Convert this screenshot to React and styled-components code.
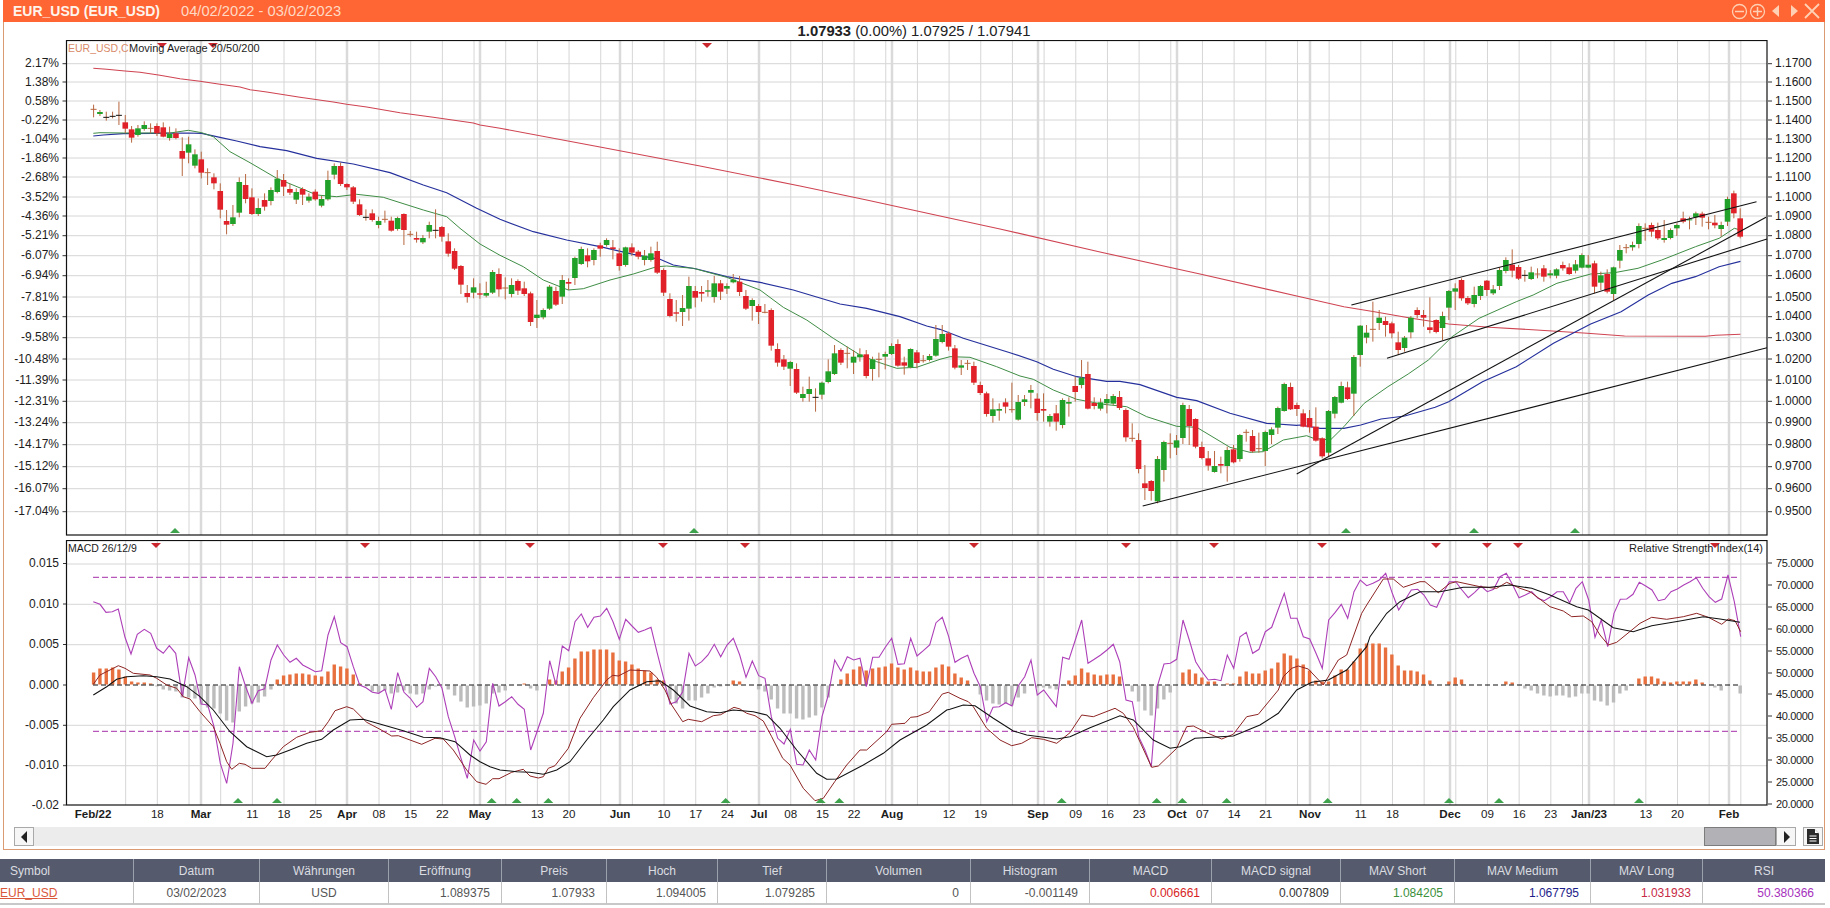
import React from 'react';
import styled, { createGlobalStyle } from 'styled-components';

const Global = createGlobalStyle`
  html, body { margin: 0; padding: 0; background: #fff; overflow: hidden; }
  body { font-family: "Liberation Sans", Arial, sans-serif; }
`;

const barX = (i) => 93.6 + 6.333 * i;
const seg = (pts, ox, oy, sx = 3, sy = 3) => pts.map(([x, y]) => [ox + x / sx, oy + y / sy]);
const join = (...segs) => {
  const out = [];
  segs.forEach((s) => s.forEach((p) => { if (!out.length || p[0] > out[out.length - 1][0] + 0.5) out.push(p); }));
  return out;
};
const toPts = (a) => a.map(([x, y]) => `${x.toFixed(1)},${y.toFixed(1)}`).join(' ');
const SX6 = 1568 / 530;

/* candles: type, wick top, body top, body bottom, wick bottom (zoom units) */
const C7 = [['t',14,28,28,52],['g',30,36,42,48],['d',35,52,52,62],['d',35,49,49,55],['d',5,46,46,75],['r',45,67,86,100],['r',78,88,113,128],['g',75,85,105,110],['g',64,75,87,92],['t',70,85,85,100],
['r',70,78,100,108],['r',67,82,110,112],['g',80,102,114,122],['r',85,100,114,118],['r',112,153,176,228],['g',110,133,158,190],['g',148,163,197,205],['r',155,178,218,235],['t',205,218,218,255],['r',220,232,250,268],
['r',250,273,329,355],['r',330,363,374,403],['g',315,352,372,378],['g',232,246,338,352],['r',222,255,297,310],['r',265,292,342,345],['g',295,324,342,348],['r',280,300,320,332],['g',262,270,303,316],['g',210,236,276,280],
['r',222,240,260,288],['r',252,267,278,285],['g',265,276,299,312],['r',262,267,284,315],['g',280,290,302,308],['r',268,275,298,302],['g',288,297,317,322],['g',212,240,298,302],['g',190,198,224,238],['r',188,198,252,258],
['r',250,252,262,270],['r',258,262,305,312],['r',298,313,345,348],['d',328,352,352,362],['r',328,340,360,365],['g',350,363,375,385],['t',332,358,358,368],['r',350,362,392,395],['g',350,354,387,392],['r',340,342,390,435],
['t',393,403,403,410],['r',395,414,419,428],['g',405,414,427,432],['g',365,375,395,415],['d',328,391,391,415],['r',378,381,410,425],['r',400,424,461,470],['r',445,453,506,510],['r',495,498,554,582],['r',555,579,591,608],
['g',535,562,578,595],['r',550,580,584,596],['g',545,579,587,592],['g',510,516,578,582]];
const C8 = [['r',205,222,268,290],['t',232,264,264,298],['g',235,255,282,292],['r',238,243,272,285],['r',245,265,282,288],['r',275,280,366,378],['g',300,344,354,384],['g',325,330,352,358],['g',255,260,326,330],['r',260,273,314,318],
['g',225,240,290,312],['r',235,246,251,270],['g',170,174,234,255],['g',140,147,192,195],['r',145,166,184,202],['g',145,150,180,196],['r',128,136,146,170],['g',115,120,135,140],['r',120,142,147,178],['r',145,160,198,212],
['g',140,142,195,200],['r',130,142,158,168],['r',150,155,170,178],['g',150,167,180,196],['g',140,160,180,185],['r',125,153,218,222],['r',205,210,278,288],['r',280,297,348,352],['r',300,337,341,365],['g',285,324,336,378],
['g',230,258,326,362],['r',258,273,293,322],['r',258,276,281,305],['g',240,271,275,290],['g',228,250,291,308],['r',240,250,275,300],['g',250,258,266,282],['g',222,239,247,250],['r',228,245,276,288],['r',270,288,326,330],
['g',295,300,318,362],['r',312,318,336,372],['t',312,337,337,340],['r',325,330,437,452],['r',430,447,488,500],['r',465,478,500,510],['g',483,486,506,558],['r',490,507,578,582],['g',560,582,594,605],['g',530,567,582,605],
['d',565,592,592,635],['g',545,548,584,598],['g',478,514,546,550],['g',435,460,522,525],['r',445,450,488,495],['t',440,460,460,505],['g',450,470,488,522],['g',445,463,472,485],['r',450,463,528,535],['g',470,478,507,542],
['t',458,478,478,532],['g',455,462,470,508],['g',430,438,462,465],['r',418,432,497,500],['r',470,487,497,524],['g',445,447,502,505],['r',450,457,489,505],['t',465,482,482,488],['g',462,468,480,484]];
const C9 = [['g',45,87,137,140],['g',45,72,96,100],['r',65,70,110,122],['r',105,115,173,178],['g',150,166,173,195],['t',150,160,160,180],['r',155,168,218,225],['r',215,225,249,255],['r',245,250,312,320],['g',265,298,318,338],
['g',280,297,302,332],['r',265,277,290,310],['t',218,299,299,308],['g',255,276,329,332],['g',255,268,276,288],['g',225,240,248,295],['r',250,266,309,332],['r',250,297,302,335],['g',312,318,335,350],['r',285,310,335,362],
['g',265,270,345,355],['g',262,276,281,320],['r',200,228,246,275],['g',150,203,225,235],['r',155,192,296,298],['r',262,279,288,298],['g',265,277,296,302],['g',252,267,280,310],['g',252,258,281,285],['r',243,261,294,300],
['r',295,300,382,395],['t',340,385,385,395],['r',370,390,477,490],['r',465,520,534,570],['r',510,513,543,572],['g',438,447,574,580],['g',392,396,480,515],['t',370,400,400,445],['g',375,391,413,435],['g',278,285,384,402],
['r',285,297,348,405],['r',325,327,410,415],['r',395,411,444,448],['r',423,445,467,482],['g',423,468,486,488],['r',440,462,467,490],['g',410,420,468,515],['r',405,418,457,460],['g',372,375,447,455],['t',358,367,367,395],
['r',360,378,424,428],['t',368,416,416,428],['g',362,366,423,468],['g',352,358,375,402],['g',290,294,353,372],['g',218,222,303,305],['r',218,231,298,300],['r',278,285,297,318],['r',298,310,350,352],['r',300,324,352,368],
['r',292,350,392,395],['r',382,385,439,445],['g',300,303,428,440],['g',258,261,311,325],['g',215,228,278,280],['r',215,232,267,270],['g',135,141,251,318],['g',45,47,135,170],['g',45,68,83,100]];
const C6 = [['t',395,478,478,515],['g',420,443,459,480],['r',440,453,465,500],['r',455,460,490,505],['r',485,517,540,555],['g',498,503,534,545],['g',438,443,487,505],['r',412,420,435,445],['r',420,435,443,470],['r',382,472,480,490],
['r',448,450,486,490],['g',425,438,474,510],['g',360,363,413,450],['g',340,355,365,420],['r',325,330,385,392],['r',378,384,400,405],['g',350,375,402,412],['g',345,348,378,390],['r',330,332,360,378],['g',345,358,370,375],
['g',292,300,348,360],['g',262,270,303,310],['r',238,284,302,322],['r',285,291,326,330],['d',300,316,316,335],['g',290,307,327,330],['t',295,312,312,325],['r',285,295,320,335],['g',300,310,316,325],['g',295,298,317,325],
['r',275,285,295,302],['r',280,292,312,315],['g',270,283,302,310],['g',250,255,293,295],['g',255,284,293,295],['r',272,280,350,370],['g',305,316,338,360],['r',298,312,365,370],['g',290,292,372,390],['g',225,240,272,295],
['t',222,233,233,250],['g',215,225,232,242],['g',160,168,222,235],['t',160,175,175,212],['r',158,165,185,200],['r',158,180,205,210],['g',150,204,210,218],['g',175,180,204,208],['g',160,165,175,198],['r',125,145,155,160],
['g',140,148,151,178],['g',125,130,142,165],['r',125,131,143,170],['t',140,157,157,178],['r',135,158,166,175],['g',155,165,177,200],['g',80,87,155,168],['r',62,70,130,145],['r',115,145,200,205]];

const toCandles = (list, start, oy) => list.map((c, k) => ({ t: c[0], i: start + k, wt: oy + c[1] / 3, bt: oy + c[2] / 3, bb: oy + c[3] / 3, wb: oy + c[4] / 3 }));
const candles = [...toCandles(C7, 0, 100), ...toCandles(C8, 64, 200), ...toCandles(C9, 133, 310), ...toCandles(C6, 202, 170)];

const hist = [
12,16,16,17,15,8,3,2,2,1,
-1,-4,-5,-6,-12,-12,-13,-19,-22,-23,
-28,-35,-37,-26,-21,-18,-17,-11,-4,5,
9,10,11,11,10,9,8,13,20,18,
16,10,1,-1,-6,-7,-5,-8,-7,-5,
-8,-9,-8,-4,-1,0,-4,-10,-16,-22,
-21,-20,-18,-8,-7,-5,0,0,1,-3,
-5,0,5,4,13,17,26,33,33,35,
35,35,32,24,23,20,16,14,12,5,
4,-14,-18,-23,-15,-15,-12,-8,-2,-1,
0,4,3,0,0,-4,-6,-14,-23,-28,
-28,-33,-34,-32,-30,-22,-12,0,5,11,
15,18,14,16,17,18,21,17,15,17,
14,13,13,17,20,18,11,7,4,0,
-9,-15,-18,-19,-18,-20,-12,-8,0,-2,
-2,-3,-4,0,4,9,16,12,10,9,
10,10,8,0,-6,-16,-25,-30,-23,-14,
-7,0,12,15,11,7,3,3,0,1,
1,8,13,11,11,14,16,22,31,29,
26,20,14,4,3,3,9,15,15,23,
36,41,41,41,37,30,19,14,14,13,
10,4,0,0,3,7,5,0,0,0,
0,0,0,3,2,0,-3,-5,-8,-10,
-11,-10,-10,-12,-11,-8,-8,-15,-16,-20,
-17,-8,-5,0,6,8,8,6,3,2,
3,3,3,5,2,0,-2,-5,0,0,
-8];

const ma200 = join(
  seg([[280,205],[320,208],[375,213],[420,217],[480,226],[540,236],[600,244],[660,253],[720,261],[750,269],[800,276],[900,292],[1000,306],[1040,313],[1100,321],[1200,338],[1300,352],[1420,369],[1440,375],[1500,385]],0,0),
  [[600,147],[700,166],[800,186],[866.7,200],[940,216],[1000,229],[1100,252],[1200,274]],
  seg([[0,380],[130,410],[220,425],[330,445],[440,462],[560,472],[700,480],[850,490],[960,498],[1200,499],[1230,496],[1303,493]],1300,170,SX6)
);
const ma50 = join(
  seg([[70,108],[100,105],[160,101],[250,100],[350,99],[395,100],[450,112],[500,123],[570,140],[650,152],[740,175],[850,192],[960,218],[1060,255],[1130,278],[1220,325],[1290,358]],70,100),
  seg([[0,52],[100,95],[200,120],[300,140],[400,163],[480,178],[520,195],[590,207],[680,230],[780,247],[880,270],[1020,312],[1100,325],[1200,350],[1280,378],[1320,388]],500,200),
  seg([[0,50],[100,85],[240,128],[320,155],[370,178],[440,200],[530,214],[570,214],[630,224],[740,262],[800,272],[900,310],[1010,340],[1100,346]],930,310),
  seg([[0,765],[60,775],[130,775],[180,765],[240,747],[310,738],[400,712],[440,695],[540,635],[640,590],[750,520],[860,462],[950,425],[1030,375],[1100,340],[1170,320],[1240,290],[1303,274]],1300,170,SX6)
);
const ma20 = join(
  seg([[70,100],[90,98],[160,99],[300,99],[355,91],[395,98],[430,110],[480,155],[540,188],[620,235],[700,268],[740,285],[800,290],[860,283],[940,292],[1060,330],[1130,350],[1170,385],[1230,432],[1290,466]],70,100),
  seg([[0,163],[70,200],[130,240],[205,270],[250,266],[330,240],[400,222],[470,200],[500,198],[580,205],[680,232],[780,270],[850,322],[920,360],[1000,415],[1080,465],[1130,485],[1190,505],[1250,502],[1320,478]],500,200),
  seg([[0,163],[60,140],[120,142],[200,170],[270,198],[310,208],[370,240],[440,268],[520,283],[590,290],[650,320],[740,349],[800,352],[900,412],[960,427],[1000,425],[1060,390],[1130,377]],930,310),
  seg([[40,805],[90,810],[130,770],[190,700],[260,650],[320,612],[380,570],[450,500],[530,445],[640,395],[690,375],[760,340],[860,312],[930,308],[1000,295],[1070,270],[1170,230],[1240,205],[1285,175],[1303,180]],1300,170,SX6)
);
const trends = [[1351.4,305,1756.5,201.7],[1387,358.3,1767,239],[1296.7,474,1766,217.3],[1142.7,506,1767,347.7]];

const rsi = join(
  seg([[280,305],[300,313],[318,337],[337,335],[355,327],[375,412],[393,462],[412,403],[433,388],[452,400],[470,445],[490,460],[508,437],[527,460],[547,590],[566,473],[585,525],[604,612],[623,615],[642,680],[661,790],[680,850],[699,730],[718,500],[737,560],[756,610],[775,572],[794,566],[813,480],[832,435],[851,465],[870,487],[889,475],[908,495],[927,505],[946,515],[965,512],[984,405],[1003,350],[1022,428],[1041,440],[1060,500],[1079,555],[1098,563],[1117,577],[1136,580],[1155,568],[1174,628],[1193,518],[1212,577],[1231,595],[1250,622],[1269,605],[1288,505],[1307,530],[1326,565],[1345,650],[1364,710],[1383,775],[1402,835],[1421,720],[1440,753]],0,500),
  seg([[0,630],[19,605],[38,430],[57,498],[76,485],[95,470],[114,493],[133,508],[152,630],[171,575],[190,520],[209,362],[228,435],[247,318],[266,332],[285,245],[304,222],[323,262],[342,232],[361,228],[380,205],[399,245],[418,298],[437,238],[456,258],[475,277],[494,270],[513,262],[532,340],[551,415],[570,492],[589,485],[608,455],[627,340],[646,378],[665,365],[684,345],[703,313],[722,350],[741,315],[760,295],[779,345],[798,412],[817,363],[836,407],[855,415],[874,530],[893,595],[912,612],[931,568],[950,673],[969,675],[988,630],[1007,660],[1026,530],[1045,465],[1064,360],[1083,393],[1102,350],[1121,360],[1140,355],[1159,440],[1178,352],[1197,352],[1216,322],[1235,295],[1254,373],[1273,371],[1292,295],[1311,348],[1330,332],[1349,315],[1368,248],[1387,232],[1406,290],[1425,367]],480,540),
  seg([[15,367],[34,355],[53,346],[72,400],[91,440],[110,545],[129,502],[148,500],[167,488],[186,498],[205,437],[224,410],[243,360],[262,465],[281,450],[300,475],[319,500],[338,352],[357,358],[376,300],[395,240],[414,370],[433,358],[452,345],[471,330],[490,313],[509,365],[528,480],[547,485],[566,590],[585,630],[604,680],[623,435],[642,372],[661,370],[680,358],[699,240],[718,300],[737,365],[756,395],[775,420],[794,418],[813,422],[832,345],[851,385],[870,290],[889,277],[908,340],[927,328],[946,275],[965,262],[984,210],[1003,160],[1022,235],[1041,235],[1060,290],[1079,297],[1098,340],[1117,385],[1136,240],[1155,218],[1174,193],[1193,235],[1212,155],[1231,120],[1250,137],[1269,130],[1288,120]],950,540),
  seg([[107,130],[127,190],[146,240],[165,210],[184,180],[203,178],[222,195],[241,225],[260,232],[279,190],[298,155],[317,155],[336,180],[355,203],[374,187],[393,168],[412,185],[431,178],[450,140],[469,130],[488,165],[507,203],[526,195],[545,185],[564,205],[583,212],[602,200],[621,185],[640,185],[659,218],[678,175],[697,155],[716,210],[735,322],[754,270],[773,350],[792,250],[811,208],[830,207],[849,193],[868,157],[887,168],[906,180],[925,212],[944,208],[963,185],[982,177],[1001,165],[1020,155],[1039,143],[1058,175],[1077,200],[1096,217],[1115,207],[1134,135],[1153,215],[1172,320]],1350,530)
);
const macd = join(
  seg([[280,553],[300,525],[340,505],[355,497],[375,505],[400,520],[450,525],[470,535],[500,555],[530,565],[550,590],[570,597],[600,635],[640,680],[660,730],[680,785],[695,808],[718,790],[735,793],[755,805],[795,805],[815,780],[850,740],[890,712],[930,697],[965,692],[985,665],[1005,632],[1040,620],[1060,627],[1100,667],[1140,688],[1175,708],[1195,707],[1265,733],[1305,715],[1330,717],[1360,750],[1400,810],[1430,845]],0,500),
  seg([[0,728],[18,733],[38,716],[57,716],[95,697],[130,688],[150,708],[175,714],[190,710],[205,685],[225,677],[265,625],[300,535],[340,473],[380,420],[398,406],[415,408],[450,390],[510,393],[530,412],[555,450],[575,495],[608,545],[625,538],[665,545],[700,527],[722,524],[762,502],[780,507],[800,520],[825,527],[850,543],[875,590],[908,655],[930,675],[970,745],[1005,782],[1030,775],[1064,725],[1100,675],[1140,630],[1160,630],[1220,575],[1235,553],[1275,550],[1292,532],[1311,530],[1348,515],[1387,462],[1405,457]],480,540),
  seg([[0,460],[30,475],[55,485],[70,500],[110,565],[150,600],[185,617],[215,610],[245,593],[280,598],[320,610],[360,578],[395,525],[430,530],[495,505],[520,520],[550,562],[605,682],[625,678],[680,625],[710,560],[730,558],[770,578],[815,597],[850,583],[890,530],[925,523],[985,450],[1000,410],[1025,385],[1045,378],[1075,387],[1120,435],[1165,360],[1190,345],[1235,220]],950,540),
  seg([[30,270],[50,225],[100,147],[130,147],[160,172],[210,155],[225,155],[265,188],[300,160],[320,155],[390,170],[440,175],[470,157],[510,175],[540,185],[600,230],[640,243],[665,260],[700,258],[725,275],[750,315],[775,345],[800,337],[870,280],[905,262],[950,268],[1000,260],[1040,250],[1075,262],[1115,283],[1135,267],[1155,272],[1172,305]],1350,530)
);
const signal = join(
  seg([[280,585],[320,560],[350,538],[380,530],[430,527],[470,530],[510,537],[560,560],[600,590],[640,630],[690,695],[740,740],[800,770],[830,765],[870,750],[920,730],[965,718],[1000,690],[1050,660],[1090,658],[1150,675],[1210,692],[1270,712],[1320,713],[1365,725],[1410,765]],0,500),
  seg([[0,665],[30,680],[60,690],[110,695],[150,697],[190,703],[230,690],[270,665],[320,600],[370,540],[400,500],[450,450],[500,425],[540,422],[580,450],[630,498],[680,515],[720,518],[760,510],[820,515],[860,525],[900,565],[950,630],[1010,700],[1040,718],[1070,717],[1150,675],[1210,640],[1260,600],[1340,555],[1400,510]],480,540),
  seg([[0,508],[40,495],[75,497],[130,535],[190,573],[230,585],[320,597],[360,590],[420,563],[510,527],[550,540],[610,600],[660,625],[690,620],[735,595],[810,590],[850,588],[930,555],[985,520],[1040,450],[1085,427],[1135,420],[1190,390],[1250,320]],950,540),
  seg([[30,375],[60,320],[110,250],[150,215],[210,185],[270,185],[340,172],[420,172],[480,165],[545,175],[600,195],[680,230],[715,240],[790,293],[850,305],[905,287],[990,273],[1060,260],[1110,267],[1170,277]],1350,530)
);

const weekLines = Array.from({ length: 52 }, (_, k) => 94 + 31.67 * (k + 1));
const monthLines = [201, 347, 480, 620, 759, 892, 1038, 1177, 1310, 1450, 1589, 1729];

const leftTop = ['2.17%','1.38%','0.58%','-0.22%','-1.04%','-1.86%','-2.68%','-3.52%','-4.36%','-5.21%','-6.07%','-6.94%','-7.81%','-8.69%','-9.58%','-10.48%','-11.39%','-12.31%','-13.24%','-14.17%','-15.12%','-16.07%','-17.04%'];
const rightTop = ['1.1700','1.1600','1.1500','1.1400','1.1300','1.1200','1.1100','1.1000','1.0900','1.0800','1.0700','1.0600','1.0500','1.0400','1.0300','1.0200','1.0100','1.0000','0.9900','0.9800','0.9700','0.9600','0.9500'];
const topY = [62.7,81,100,119,138,157,176,196,215,234.7,254.7,274.7,296,315.7,336.7,358,379,400.3,421.7,443.7,465.7,487.7,510.7];

const lowLeft = [['0.015',563.5],['0.010',604],['0.005',644.5],['0.000',685],['-0.005',725.3],['-0.010',765.7],['-0.02',805]];
const lowRight = [['75.0000',563],['70.0000',585],['65.0000',607],['60.0000',629],['55.0000',651],['50.0000',673],['45.0000',694],['40.0000',716],['35.0000',738],['30.0000',760],['25.0000',782],['20.0000',804]];

const kx = (k) => 94 + 31.67 * k;
const dates = [
  ['Feb/22',93,1],['18',kx(2)],['Mar',201,1],['11',kx(5)],['18',kx(6)],['25',kx(7)],['Apr',347,1],['08',kx(9)],['15',kx(10)],['22',kx(11)],['May',480,1],['13',kx(14)],['20',kx(15)],
  ['Jun',620,1],['10',kx(18)],['17',kx(19)],['24',kx(20)],['Jul',759,1],['08',kx(22)],['15',kx(23)],['22',kx(24)],['Aug',892,1],['12',kx(27)],['19',kx(28)],['Sep',1038,1],['09',kx(31)],['16',kx(32)],['23',kx(33)],
  ['Oct',1177,1],['07',kx(35)],['14',kx(36)],['21',kx(37)],['Nov',1310,1],['11',kx(40)],['18',kx(41)],['Dec',1450,1],['09',kx(44)],['16',kx(45)],['23',kx(46)],['Jan/23',1589,1],['13',kx(49)],['20',kx(50)],['Feb',1729,1],
];

const RED = '#c9272d';
const GREEN = '#3fa34d';

const Page = styled.div`width: 1830px; height: 908px; background: #fff; overflow: hidden;`;
const Window = styled.section`width: 1822px; margin-left: 3px;`;
const TitleBar = styled.header`display: flex; align-items: center; height: 22px; background: #ff6633; padding: 0 4px 0 10px; box-sizing: border-box;`;
const Title = styled.h1`margin: 0; font: bold 14px "Liberation Sans", Arial, sans-serif; color: #fff4ec; width: 168px;`;
const Range = styled.span`font-size: 14.7px; color: #ffd9c4; flex: 1;`;
const IconSlot = styled.button`
  width: 18.2px; height: 22px; padding: 0; border: 0; background: none;
  display: flex; align-items: center; justify-content: center;
`;
const Body = styled.div`
  border: 1px solid #dc9a72; border-top: 0; height: 828px; box-sizing: border-box; display: flex; flex-direction: column;
`;
const InfoLine = styled.div`height: 18px; line-height: 18px; text-align: center; font-size: 14.8px; color: #222;`;
const ChartSvg = styled.svg`display: block; flex: none;`;
const Axis = styled.text`font: 12px "Liberation Sans", Arial, sans-serif; fill: #1c1c1c;`;
const AxisSmall = styled.text`font: 11px "Liberation Sans", Arial, sans-serif; letter-spacing: -0.35px; fill: #1c1c1c;`;
const Legend = styled.text`font: ${(p) => p.$size || 11}px "Liberation Sans", Arial, sans-serif; fill: ${(p) => p.$color || '#1c1c1c'};`;
const DateLabel = styled.text`font: ${(p) => (p.$bold ? 'bold' : 'normal')} 11.6px "Liberation Sans", Arial, sans-serif; fill: #1c1c1c; text-anchor: middle;`;

const ScrollRow = styled.div`display: flex; align-items: stretch; height: 19px; margin-top: 3px; padding: 0 1px 0 10px; gap: 0;`;
const ScrollBtn = styled.button`
  width: 20px; flex: none; padding: 0; background: #f6f6f6; border: 1px solid #a9a9a9; box-sizing: border-box;
  display: flex; align-items: center; justify-content: center;
`;
const Track = styled.div`flex: 1; background: #ececec; display: flex; justify-content: flex-end;`;
const Thumb = styled.div`width: 72px; background: #b2b2b6; border: 1px solid #7c7c7c; box-sizing: border-box;`;
const DocBtn = styled(ScrollBtn)`margin-left: 7px; width: 20px;`;

const Table = styled.table`
  border-collapse: separate; border-spacing: 0; table-layout: fixed; width: 1825px; margin-top: 9px;
  font: 12px "Liberation Sans", Arial, sans-serif;
`;
const Th = styled.th`
  height: 23px; padding: 0 0 0 ${(p) => (p.$left ? '10px' : '0')}; background: #555b6c; color: #dcdde2; font-weight: normal; box-sizing: border-box;
  text-align: ${(p) => (p.$left ? 'left' : 'center')}; border-right: 1px solid #9ba0ad;
  &:last-child { border-right: 0; }
`;
const Td = styled.td`
  height: 23px; box-sizing: border-box; padding: 0 ${(p) => (p.$align === 'right' ? '11px' : '0')} 0 0; color: ${(p) => p.$color || '#555'};
  text-align: ${(p) => p.$align || 'center'}; border-right: 1px solid #c2c2c2; border-bottom: 2px solid #c8c8c8;
  &:last-child { border-right: 0; }
`;
const SymbolLink = styled.a`color: #d9583a; text-decoration: underline; font-weight: normal;`;

const Grid = ({ top, bottom, ys }) => (
  <g>
    {ys.map((y, i) => <line key={i} x1={66} x2={1767} y1={y} y2={y} stroke="#d6d6d6" strokeWidth="1" />)}
    {weekLines.map((x, i) => <line key={i} x1={x} x2={x} y1={top} y2={bottom} stroke="#d6d6d6" strokeWidth="1" />)}
    {monthLines.map((x, i) => <line key={i} x1={x} x2={x} y1={top} y2={bottom} stroke="#dadada" strokeWidth="2.5" />)}
  </g>
);

const Triangles = ({ xs, y, down }) => (
  <g fill={down ? RED : GREEN}>
    {xs.map((x, i) => (
      <polygon key={i} points={down ? `${x - 5},${y} ${x + 5},${y} ${x},${y + 5}` : `${x - 5},${y + 5} ${x + 5},${y + 5} ${x},${y}`} />
    ))}
  </g>
);

const Candle = ({ c }) => {
  const x = barX(c.i);
  const fill = c.t === 'g' ? '#21a12a' : '#e0212a';
  const isDoji = c.t === 'd' || c.t === 't';
  return (
    <g>
      <line x1={x} x2={x} y1={c.wt} y2={c.wb} stroke="#b7673f" strokeWidth="1" />
      {isDoji
        ? <line x1={x - 3} x2={x + 3} y1={c.bt} y2={c.bt} stroke={c.t === 'd' ? '#111' : '#b7673f'} strokeWidth="1" />
        : <rect x={x - 2.8} width="5.6" y={c.bt} height={Math.max(c.bb - c.bt, 1)} fill={fill} />}
    </g>
  );
};

const PriceChart = () => (
  <ChartSvg width="1820" height="500" viewBox="4 40 1820 500">
    <Grid top={41} bottom={535} ys={topY.map((y) => y + 1)} />
    {leftTop.map((t, i) => (
      <g key={t}>
        <line x1={62.5} x2={66} y1={topY[i] + 1} y2={topY[i] + 1} stroke="#333" />
        <Axis x={59} y={topY[i] + 4.5} textAnchor="end">{t}</Axis>
      </g>
    ))}
    {rightTop.map((t, i) => (
      <g key={t}>
        <line x1={1768} x2={1772} y1={topY[i] + 1} y2={topY[i] + 1} stroke="#333" />
        <Axis x={1775} y={topY[i] + 4.5}>{t}</Axis>
      </g>
    ))}
    <polyline points={toPts(ma200)} fill="none" stroke="#cf4452" strokeWidth="1.1" />
    <polyline points={toPts(ma50)} fill="none" stroke="#25309c" strokeWidth="1.2" />
    <polyline points={toPts(ma20)} fill="none" stroke="#3f8d45" strokeWidth="1" />
    {candles.map((c) => <Candle key={c.i} c={c} />)}
    {trends.map(([a, b, c, d], i) => <line key={i} x1={a} y1={b} x2={c} y2={d} stroke="#111" strokeWidth="1.1" />)}
    <Triangles xs={[162, 213, 707]} y={43} down />
    <Triangles xs={[175, 694, 1346, 1474, 1575]} y={528} />
    <rect x={66.5} y={40.5} width={1700.5} height={494.5} fill="none" stroke="#111" strokeWidth="1.2" />
    <Legend x={68} y={52} $size={10.5} $color="#d98a68">EUR_USD,C</Legend>
    <Legend x={129} y={52}>Moving Average 20/50/200</Legend>
  </ChartSvg>
);

const MacdChart = () => (
  <ChartSvg width="1820" height="284" viewBox="4 540 1820 284">
    <Grid top={541} bottom={805} ys={[564, 604.3, 644.7, 725.3, 765.7]} />
    {lowLeft.map(([t, y]) => (
      <g key={t}>
        <line x1={63} x2={66} y1={y} y2={y} stroke="#333" />
        <Axis x={59} y={y + 3.5} textAnchor="end">{t}</Axis>
      </g>
    ))}
    {lowRight.map(([t, y]) => (
      <g key={t}>
        <line x1={1768} x2={1772} y1={y} y2={y} stroke="#333" />
        <AxisSmall x={1776} y={y + 4}>{t}</AxisSmall>
      </g>
    ))}
    {hist.map((h, i) => (h === 0 ? null : (
      <rect key={i} x={barX(i) - 1.7} width="3.4" y={h > 0 ? 684.5 - h : 685.5} height={Math.abs(h)} fill={h > 0 ? '#e8703f' : '#bcbcbc'} />
    )))}
    <line x1={93} x2={1738} y1={685} y2={685} stroke="#111" strokeWidth="1" strokeDasharray="5 3" />
    <line x1={93} x2={1737} y1={577.3} y2={577.3} stroke="#a52da8" strokeWidth="1" strokeDasharray="6 3" />
    <line x1={93} x2={1737} y1={731.3} y2={731.3} stroke="#a52da8" strokeWidth="1" strokeDasharray="6 3" />
    <polyline points={toPts(rsi)} fill="none" stroke="#ad3fb8" strokeWidth="1.1" />
    <polyline points={toPts(macd)} fill="none" stroke="#8e2424" strokeWidth="1" />
    <polyline points={toPts(signal)} fill="none" stroke="#111" strokeWidth="1.05" />
    <Triangles xs={[156, 365, 530, 663, 745, 974, 1126, 1214, 1322, 1436, 1487, 1518, 1715]} y={543} down />
    <Triangles xs={[238, 277, 491.7, 516.7, 548.3, 725.7, 820.7, 839.3, 1061.7, 1156.7, 1182.3, 1226.7, 1327.7, 1449, 1499, 1639]} y={798} />
    <rect x={66.5} y={540.5} width={1700.5} height={264.5} fill="none" stroke="#111" strokeWidth="1.2" />
    <Legend x={68} y={552} $size={10.5}>MACD 26/12/9</Legend>
    <Legend x={1763} y={552} textAnchor="end">Relative Strength Index(14)</Legend>
    {dates.map(([t, x, b], i) => <DateLabel key={i} x={x} y={818} $bold={!!b}>{t}</DateLabel>)}
  </ChartSvg>
);

const ICON = '#ffd0b4';
const icons = [
  <svg width="17" height="17" viewBox="0 0 17 17" key="m"><circle cx="8.5" cy="8.5" r="7" fill="none" stroke={ICON} strokeWidth="1.3" /><line x1="4" x2="13" y1="8.5" y2="8.5" stroke={ICON} strokeWidth="1.5" /></svg>,
  <svg width="17" height="17" viewBox="0 0 17 17" key="p"><circle cx="8.5" cy="8.5" r="7" fill="none" stroke={ICON} strokeWidth="1.3" /><line x1="4" x2="13" y1="8.5" y2="8.5" stroke={ICON} strokeWidth="1.5" /><line x1="8.5" x2="8.5" y1="4" y2="13" stroke={ICON} strokeWidth="1.5" /></svg>,
  <svg width="8" height="12" viewBox="0 0 8 12" key="l"><polygon points="7,0 7,12 0,6" fill={ICON} /></svg>,
  <svg width="8" height="12" viewBox="0 0 8 12" key="r"><polygon points="1,0 1,12 8,6" fill={ICON} /></svg>,
  <svg width="16" height="16" viewBox="0 0 16 16" key="x"><path d="M1 1 L15 15 M15 1 L1 15" stroke={ICON} strokeWidth="1.8" fill="none" /></svg>,
];

const widths = [134, 126, 129, 113, 105, 111, 109, 144, 119, 122, 129, 114, 136, 112, 122];
const heads = ['Symbol','Datum','Währungen','Eröffnung','Preis','Hoch','Tief','Volumen','Histogram','MACD','MACD signal','MAV Short','MAV Medium','MAV Long','RSI'];
const cells = [
  ['03/02/2023'], ['USD'], ['1.089375','right'], ['1.07933','right'], ['1.094005','right'], ['1.079285','right'], ['0','right'], ['-0.001149','right'],
  ['0.006661','right','#d81e1e'], ['0.007809','right','#333'], ['1.084205','right','#3c8f3c'], ['1.067795','right','#1d1d8a'], ['1.031933','right','#c72a45'], ['50.380366','right','#a631bd'],
];

export default function App() {
  return (
    <Page>
      <Global />
      <Window>
        <TitleBar>
          <Title>EUR_USD (EUR_USD)</Title>
          <Range>04/02/2022 - 03/02/2023</Range>
          {icons.map((ic, i) => <IconSlot key={i}>{ic}</IconSlot>)}
        </TitleBar>
        <Body>
          <InfoLine><b>1.07933</b> (0.00%) 1.07925 / 1.07941</InfoLine>
          <PriceChart />
          <MacdChart />
          <ScrollRow>
            <ScrollBtn>
              <svg width="7" height="12" viewBox="0 0 7 12"><polygon points="6,0 6,12 0,6" fill="#222" /></svg>
            </ScrollBtn>
            <Track><Thumb /></Track>
            <ScrollBtn>
              <svg width="7" height="12" viewBox="0 0 7 12"><polygon points="1,0 1,12 7,6" fill="#222" /></svg>
            </ScrollBtn>
            <DocBtn>
              <svg width="12" height="15" viewBox="0 0 12 15">
                <path d="M0 0 H7.5 L12 4.5 V15 H0 Z" fill="#2b2b2b" />
                <path d="M8 0.5 V4 H11.5 Z" fill="#fff" />
                <path d="M2.5 7 H9.5 M2.5 9.5 H9.5 M2.5 12 H9.5" stroke="#fff" strokeWidth="1.1" />
              </svg>
            </DocBtn>
          </ScrollRow>
        </Body>
      </Window>
      <Table>
        <colgroup>{widths.map((w, i) => <col key={i} style={{ width: w }} />)}</colgroup>
        <thead>
          <tr>{heads.map((h, i) => <Th key={h} $left={i === 0}>{h}</Th>)}</tr>
        </thead>
        <tbody>
          <tr>
            <Td $align="left"><SymbolLink href="#">EUR_USD</SymbolLink></Td>
            {cells.map(([v, a, c], i) => <Td key={i} $align={a} $color={c}>{v}</Td>)}
          </tr>
        </tbody>
      </Table>
    </Page>
  );
}
